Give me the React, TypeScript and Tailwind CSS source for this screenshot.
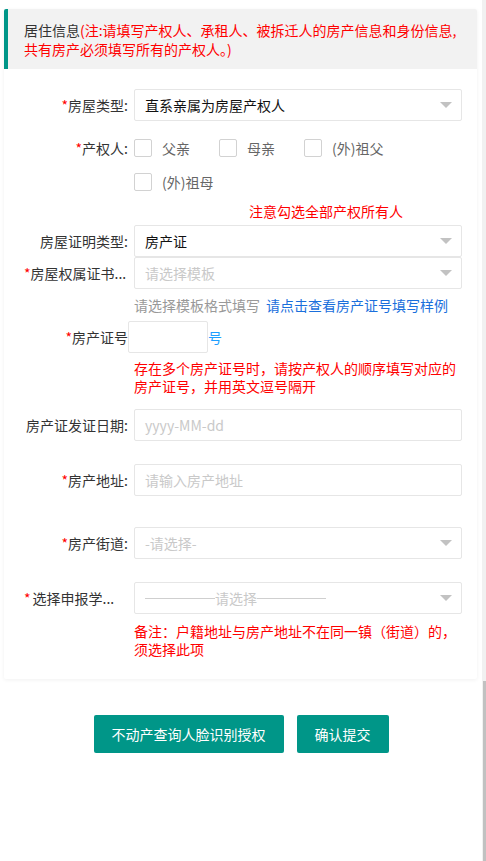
import React from "react";

const font = { fontFamily: '"Noto Sans CJK SC", "Noto Sans", sans-serif' };

function Arrow() {
  return (
    <span className="ml-auto mr-[9px] h-0 w-0 border-x-[6px] border-t-[6px] border-x-transparent border-t-[#c2c2c2]" />
  );
}

function Select({ children, placeholder }: { children: React.ReactNode; placeholder?: boolean }) {
  return (
    <div className="flex h-[32px] w-[328px] items-center rounded-[2px] border border-[#e6e6e6] bg-white pl-[10px]">
      <span className={placeholder ? "text-[#c9c9c9]" : "text-[#111]"}>{children}</span>
      <Arrow />
    </div>
  );
}

function Input({ placeholder }: { placeholder: string }) {
  return (
    <div className="flex h-[32px] w-[328px] items-center rounded-[2px] border border-[#e6e6e6] bg-white pl-[10px] text-[#c9c9c9]">
      {placeholder}
    </div>
  );
}

function Label({ children, star, left }: { children: React.ReactNode; star?: boolean; left?: boolean }) {
  return (
    <div className={`flex w-[104px] shrink-0 whitespace-nowrap text-[#333] ${left ? "justify-start" : "justify-end"}`}>
      {star && <span className="text-[#ff0000]">*</span>}
      {children}
    </div>
  );
}

function Check({ label }: { label: string }) {
  return (
    <div className="mr-[29px] flex items-center">
      <span className="h-[18px] w-[18px] rounded-[2px] border border-[#d2d2d2] bg-white" />
      <span className="ml-[10px] text-[#666]">{label}</span>
    </div>
  );
}

export default function App() {
  return (
    <div className="flex min-h-[861px] w-[486px] bg-white text-[14px]" style={font}>
      <div className="w-[482px] shrink-0">
        <div className="ml-[4px] mt-[9px] w-[473px] rounded-[2px] bg-white pb-[21px] shadow-[0_1px_4px_rgba(0,0,0,0.06)]">
          <div className="h-[60px] rounded-t-[2px] border-l-[4px] border-[#009688] bg-[#f2f2f2] pl-[16px] pt-[12px] leading-[19px] whitespace-nowrap">
            <span className="text-[#333]">居住信息</span>
            <span className="text-[#ff0000]">
              (注:请填写产权人、承租人、被拆迁人的房产信息和身份信息,
              <br />
              共有房产必须填写所有的产权人。)
            </span>
          </div>

          <div className="pl-[20px]">
            <div className="mt-[20px] flex items-center">
              <Label star>房屋类型:</Label>
              <div className="ml-[6px]">
                <Select>直系亲属为房屋产权人</Select>
              </div>
            </div>

            <div className="mt-[10px] flex">
              <div className="flex h-[34px] items-center">
                <Label star>产权人:</Label>
              </div>
              <div className="ml-[6px] flex flex-col">
                <div className="flex h-[34px] items-center">
                  <Check label="父亲" />
                  <Check label="母亲" />
                  <Check label="(外)祖父" />
                </div>
                <div className="flex h-[34px] items-center">
                  <Check label="(外)祖母" />
                </div>
              </div>
            </div>

            <div className="mt-[2px] pl-[225px] leading-[20px] text-[#ff0000]">注意勾选全部产权所有人</div>

            <div className="mt-[4px] flex items-center">
              <Label>房屋证明类型:</Label>
              <div className="ml-[6px]">
                <Select>房产证</Select>
              </div>
            </div>

            <div className="flex items-center">
              <Label star left>
                房屋权属证书...
              </Label>
              <div className="ml-[6px]">
                <Select placeholder>请选择模板</Select>
              </div>
            </div>

            <div className="mt-[6px] pl-[110px] leading-[20px] whitespace-nowrap">
              <span className="text-[#999]">请选择模板格式填写</span>
              <span className="ml-[6px] text-[#1a6fdc]">请点击查看房产证号填写样例</span>
            </div>

            <div className="mt-[6px] flex items-center">
              <Label star>房产证号</Label>
              <div className="h-[32px] w-[80px] rounded-[2px] border border-[#e6e6e6] bg-white" />
              <span className="text-[#1e9fff]">号</span>
            </div>

            <div className="mt-[6px] pl-[110px] leading-[18px] whitespace-nowrap text-[#ff0000]">
              存在多个房产证号时，请按产权人的顺序填写对应的
              <br />
              房产证号，并用英文逗号隔开
            </div>

            <div className="mt-[14px] flex items-center">
              <Label>房产证发证日期:</Label>
              <div className="ml-[6px]">
                <Input placeholder="yyyy-MM-dd" />
              </div>
            </div>

            <div className="mt-[23px] flex items-center">
              <Label star>房产地址:</Label>
              <div className="ml-[6px]">
                <Input placeholder="请输入房产地址" />
              </div>
            </div>

            <div className="mt-[31px] flex items-center">
              <Label star>房产街道:</Label>
              <div className="ml-[6px]">
                <Select placeholder>-请选择-</Select>
              </div>
            </div>

            <div className="mt-[23px] flex items-center">
              <Label star left>
                <span className="ml-[2px]">选择申报学...</span>
              </Label>
              <div className="ml-[6px]">
                <div className="flex h-[32px] w-[328px] items-center rounded-[2px] border border-[#e6e6e6] bg-white pl-[10px]">
                  <span className="h-px w-[70px] bg-[#cfcfcf]" />
                  <span className="text-[#c9c9c9]">请选择</span>
                  <span className="h-px w-[69px] bg-[#cfcfcf]" />
                  <Arrow />
                </div>
              </div>
            </div>

            <div className="mt-[8px] pl-[110px] leading-[18px] whitespace-nowrap text-[#ff0000]">
              备注：户籍地址与房产地址不在同一镇（街道）的，
              <br />
              须选择此项
            </div>
          </div>
        </div>

        <div className="mt-[36px] flex justify-center gap-[13px]">
          <button className="h-[38px] rounded-[2px] bg-[#009688] px-[18px] text-white">不动产查询人脸识别授权</button>
          <button className="h-[38px] rounded-[2px] bg-[#009688] px-[18px] text-white">确认提交</button>
        </div>
      </div>
      <div className="flex w-[4px] shrink-0 flex-col bg-[#f1f1f1]">
        <div className="h-[681px] shrink-0" />
        <div className="ml-[1px] flex-1 bg-[#c1c1c1]" />
      </div>
    </div>
  );
}
